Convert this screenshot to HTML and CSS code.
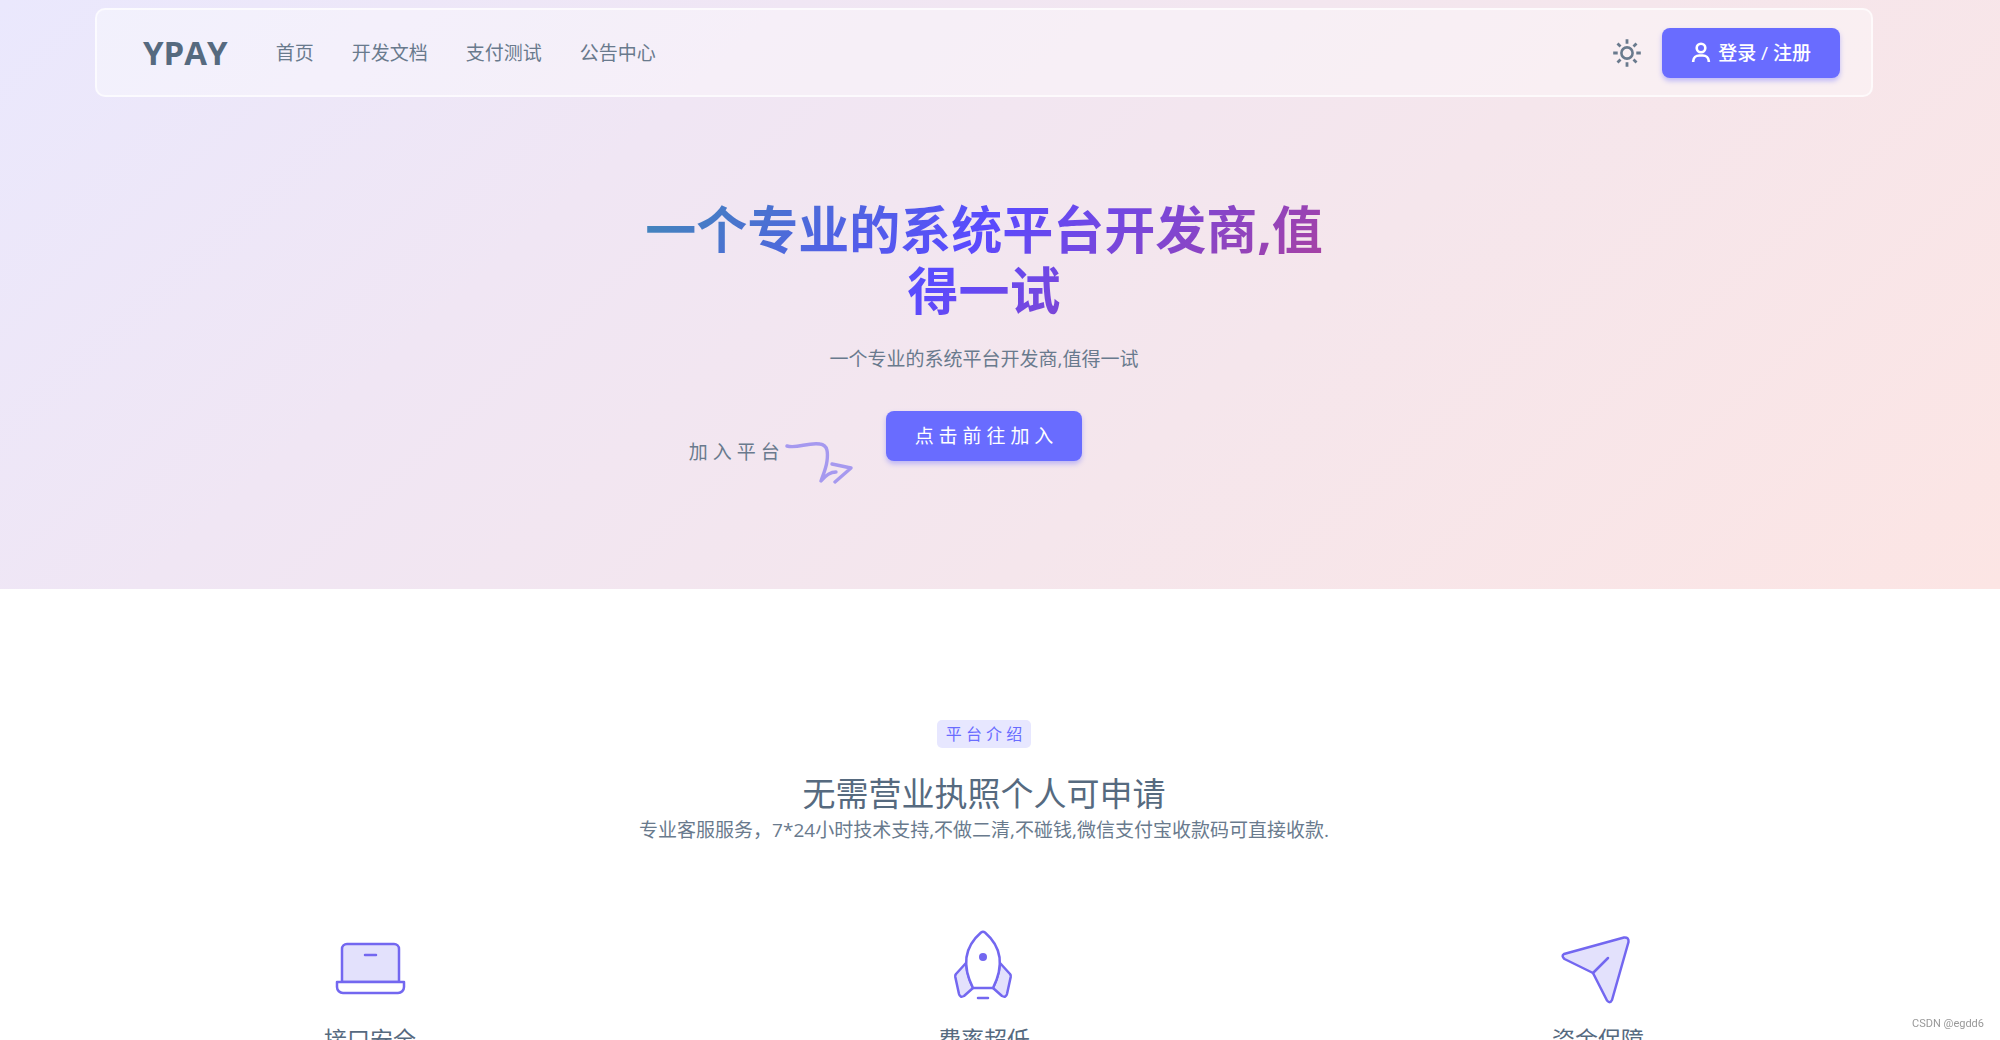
FILE: index.html
```html
<!DOCTYPE html>
<html lang="zh-CN">
<head>
    <meta charset="UTF-8">
    <meta name="viewport" content="width=device-width, initial-scale=1.0">
    <title>YPAY</title>

    <!-- style -->
    <link rel="stylesheet" href="styles.css">
</head>
<body>
    <div class="hero">
        <header class="container">
            <nav class="navbar">
                <a class="brand" href="#">YPAY</a>
                <div class="nav-links">
                    <a href="#">首页</a>
                    <a href="#">开发文档</a>
                    <a href="#">支付测试</a>
                    <a href="#">公告中心</a>
                </div>
                <button class="theme-btn" type="button" aria-label="切换主题">
                    <svg width="30" height="30" viewBox="0 0 30 30" fill="none" stroke="currentColor" stroke-width="2.8">
                        <circle cx="15" cy="15" r="5.6" stroke-width="2.6"/>
                        <path d="M15 1.200v4.500M15 24.300v4.500M1.200 15h4.500M24.300 15h4.500M5.500 5.500l3 3M21.500 21.500l3 3M5.500 24.500l3-3M21.500 8.500l3-3"/>
                    </svg>
                </button>
                <a class="btn btn-login" href="#">
                    <svg width="20" height="22" viewBox="0 0 20 22" fill="none" stroke="currentColor" stroke-width="2.6">
                        <circle cx="10" cy="6" r="4.300"/>
                        <path d="M2.200 20v-1a6 6 0 0 1 6-5.500h3.600a6 6 0 0 1 6 5.500v1"/>
                    </svg>
                    <span>登录 / 注册</span>
                </a>
            </nav>
        </header>

        <section class="container hero-text">
            <h1>一个专业的系统平台开发商,值得一试</h1>
            <p>一个专业的系统平台开发商,值得一试</p>
            <div class="cta">
                <div class="cta-hint">
                    <span>加 入 平 台</span>
                    <svg width="70" height="46" viewBox="0 0 70 46" fill="none" stroke="currentColor" stroke-width="3.4" stroke-linecap="round" stroke-linejoin="round">
                        <path d="M3 8C13 11 24 4 36 6C44 7 44 15 43 23C42 31 39 37 37 43C41 38 46 34 52 34"/>
                        <path d="M48 26L67 30L51 44"/>
                    </svg>
                </div>
                <a class="btn btn-cta" href="#">点 击 前 往 加 入</a>
            </div>
        </section>
    </div>

    <section class="container intro">
        <span class="badge">平 台 介 绍</span>
        <h2>无需营业执照个人可申请</h2>
        <p>专业客服服务，7*24小时技术支持,不做二清,不碰钱,微信支付宝收款码可直接收款.</p>
    </section>

    <section class="features">
        <div class="feature">
            <svg width="82" height="82" viewBox="0 0 82 82" stroke="currentColor" stroke-width="2.5" stroke-linejoin="round" stroke-linecap="round">
                <path d="M13 55V22a5 5 0 0 1 5-5h47a5 5 0 0 1 5 5v33z" fill="#e3e1fc"/>
                <path d="M8 55h67v5a6 6 0 0 1-6 6H14a6 6 0 0 1-6-6z" fill="#fff"/>
                <path d="M36 28h11" fill="none"/>
            </svg>
            <h3>接口安全</h3>
        </div>
        <div class="feature">
            <svg width="82" height="82" viewBox="0 0 82 82" stroke="currentColor" stroke-width="2.5" stroke-linejoin="round" stroke-linecap="round">
                <path d="M23 36L13 47Q12 48 12.300 50L16 67Q17 71 21 69L30 61Q24 49 23 36z" fill="#e3e1fc"/>
                <path d="M57 36L67 47Q68 48 67.700 50L64 67Q63 71 59 69L50 61Q56 49 57 36z" fill="#e3e1fc"/>
                <path d="M30 61C20 41 19 22 38 5.500Q40 4 42 5.500C61 22 60 41 50 61z" fill="#fff"/>
                <path d="M35 71h10" fill="none"/>
                <circle cx="40" cy="30" r="4" fill="currentColor" stroke="none"/>
            </svg>
            <h3>费率超低</h3>
        </div>
        <div class="feature">
            <svg width="82" height="82" viewBox="0 0 82 82" stroke="currentColor" stroke-width="2.5" stroke-linejoin="round" stroke-linecap="round">
                <path d="M7 27L67 10.500Q72 10 71.500 15L55 73Q53 77 50 73.500L36 46L7.500 32Q4 29 7 27z" fill="#e3e1fc"/>
                <path d="M36 46L51 31" fill="none"/>
            </svg>
            <h3>资金保障</h3>
        </div>
    </section>

    <div class="watermark">CSDN @egdd6</div>
</body>
</html>
```
FILE: styles.css
```css
* {
    box-sizing: border-box;
}

body {
    margin: 0;
    height: 100vh;
    overflow: hidden;
    font-family: "Open Sans", "Noto Sans CJK SC", sans-serif;
    font-size: 19px;
    line-height: 28px;
    color: #697a8d;
    background-color: #fff;
}

h1, h2, h3, p {
    margin: 0;
}

a {
    color: inherit;
    text-decoration: none;
}

svg {
    display: block;
}

/* content sits left of a 32px gutter */
.hero, .intro, .features {
    padding-right: 32px;
}

.container {
    max-width: 1842px;
    margin: 0 auto;
    padding: 0 32px;
}

.hero {
    padding-top: 8px;
    padding-bottom: 127px;
    background: linear-gradient(138deg, #eae8fd 0%, #f0e6f4 30%, #f5e6ec 62%, #fce5e4 100%);
}

/* navbar */
.navbar {
    display: flex;
    align-items: center;
    height: 89px;
    padding: 0 31px 0 46px;
    border: 2px solid rgba(255, 255, 255, 0.68);
    border-radius: 10px;
    background-color: rgba(255, 255, 255, 0.38);
}

.brand {
    font-size: 33px;
    font-weight: 700;
    line-height: 48px;
    color: #566a7f;
}

.nav-links {
    display: flex;
    gap: 38px;
    margin-left: 48px;
}

.theme-btn {
    margin-left: auto;
    margin-right: 20px;
    padding: 0;
    border: none;
    background: none;
    color: #697a8d;
    cursor: pointer;
}

.btn {
    display: flex;
    align-items: center;
    justify-content: center;
    height: 50px;
    padding: 0 29px;
    border-radius: 8px;
    color: #fff;
    background-color: #696cff;
    box-shadow: 0 3px 5px rgba(105, 108, 255, 0.4);
}

.btn:hover {
    background-color: #5f61e6;
}

.btn-login {
    gap: 7px;
    font-weight: 500;
}

/* hero */
.hero-text {
    padding-top: 102px;
    text-align: center;
}

.hero-text h1 {
    max-width: 706px;
    margin: 0 auto;
    font-size: 51px;
    font-weight: 700;
    line-height: 61px;
    color: transparent;
    background: linear-gradient(135deg, #28c76f 0%, #5a4aff 48%, #ff3739 100%) center / 200% 100%;
    background-clip: text;
    -webkit-background-clip: text;
}

.hero-text p {
    margin: 24px 0 38px;
}

.cta {
    display: grid;
    grid-template-columns: 1fr auto 1fr;
    column-gap: 32px;
    height: 51px;
}

.cta-hint {
    display: flex;
    gap: 4px;
    justify-self: end;
    padding-top: 27px;
}

/* intro */
.intro {
    display: flex;
    flex-direction: column;
    align-items: center;
    max-width: none;
    padding-top: 131px;
    padding-left: 0;
    text-align: center;
}

.badge {
    padding: 0 9px;
    border-radius: 5px;
    font-size: 16px;
    color: #696cff;
    background-color: #e7e7ff;
}

.intro h2 {
    margin-top: 24px;
    font-size: 33px;
    font-weight: 400;
    line-height: 44px;
    color: #566a7f;
}

/* features */
.features {
    display: grid;
    grid-template-columns: repeat(3, 1fr);
    max-width: 1874px;
    margin: 83px auto 0;
}

.feature {
    display: flex;
    flex-direction: column;
    align-items: center;
}

.feature svg, .cta-hint svg {
    color: #7367f0;
}

.cta-hint svg {
    opacity: 0.6;
}

.feature h3 {
    margin-top: 16px;
    font-size: 23px;
    font-weight: 400;
    line-height: 28px;
    color: #566a7f;
}

.watermark {
    position: fixed;
    right: 16px;
    bottom: 8px;
    font-family: Roboto, sans-serif;
    font-size: 11px;
    line-height: 16px;
    color: #999;
}
```
